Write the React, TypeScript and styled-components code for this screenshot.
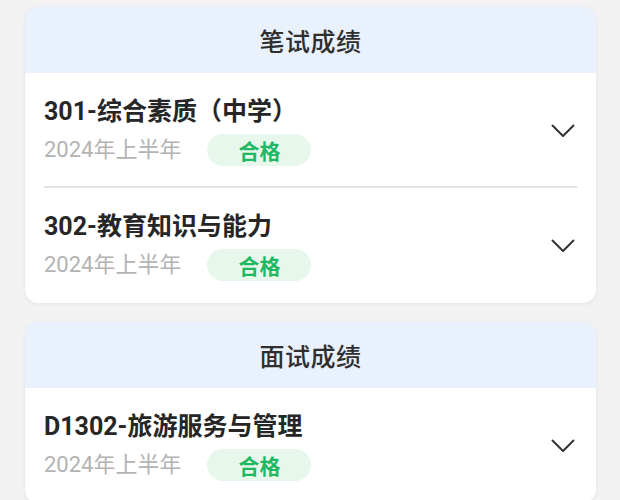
import React from "react";
import styled, { createGlobalStyle } from "styled-components";

const Global = createGlobalStyle`
  html, body {
    margin: 0;
    padding: 0;
    background: #f2f2f3;
    font-family: "Roboto", "Noto Sans CJK SC", sans-serif;
  }
`;

const Page = styled.div`
  display: flex;
  flex-direction: column;
  gap: 17px;
  padding: 6px 23px 0 24px;
`;

const Card = styled.section`
  background: #ffffff;
  border: 1px solid #e9ebee;
  border-radius: 14px;
  overflow: hidden;
  box-shadow: 0 1px 3px rgba(0, 0, 0, 0.04);
`;

const CardHead = styled.h2`
  margin: 0;
  height: 66px;
  display: flex;
  align-items: center;
  justify-content: center;
  background: #e9f1fc;
  font-size: 25px;
  font-weight: 500;
  color: #2f2f2f;
  letter-spacing: 0.5px;
`;

const Row = styled.div<{ $divider: boolean }>`
  position: relative;
  display: flex;
  align-items: center;
  justify-content: space-between;
  padding: 23px 20px 22px 19px;
  ${({ $divider }) =>
    $divider &&
    `
    &::after {
      content: "";
      position: absolute;
      left: 19px;
      right: 19px;
      bottom: 0;
      height: 2px;
      background: #e2e2e2;
    }
  `}
`;

const Info = styled.div`
  display: flex;
  flex-direction: column;
  gap: 6px;
`;

const Title = styled.div`
  font-size: 25px;
  font-weight: 700;
  line-height: 32px;
  color: #262626;
`;

const Meta = styled.div`
  display: flex;
  align-items: center;
  gap: 26px;
`;

const Period = styled.span`
  font-size: 22px;
  line-height: 32px;
  color: #b3b3b3;
`;

const Badge = styled.span`
  display: inline-flex;
  align-items: center;
  justify-content: center;
  width: 104px;
  height: 32px;
  border-radius: 16px;
  background: #e7f7eb;
  color: #1fb863;
  font-size: 21px;
  font-weight: 700;
`;

const Chevron = styled.svg`
  width: 24px;
  height: 14px;
  flex-shrink: 0;
  margin-right: 1px;
`;

type Item = { title: string; period: string; result: string };

const groups: { name: string; items: Item[] }[] = [
  {
    name: "笔试成绩",
    items: [
      { title: "301-综合素质（中学）", period: "2024年上半年", result: "合格" },
      { title: "302-教育知识与能力", period: "2024年上半年", result: "合格" },
    ],
  },
  {
    name: "面试成绩",
    items: [{ title: "D1302-旅游服务与管理", period: "2024年上半年", result: "合格" }],
  },
];

export default function App() {
  return (
    <>
      <Global />
      <Page>
        {groups.map((g) => (
          <Card key={g.name}>
            <CardHead>{g.name}</CardHead>
            {g.items.map((it, i) => (
              <Row key={it.title} $divider={i < g.items.length - 1}>
                <Info>
                  <Title>{it.title}</Title>
                  <Meta>
                    <Period>{it.period}</Period>
                    <Badge>{it.result}</Badge>
                  </Meta>
                </Info>
                <Chevron viewBox="0 0 24 14" fill="none">
                  <polyline points="1.5,1.5 12,12 22.5,1.5" stroke="#333" strokeWidth="2" strokeLinecap="round" strokeLinejoin="round" />
                </Chevron>
              </Row>
            ))}
          </Card>
        ))}
      </Page>
    </>
  );
}
